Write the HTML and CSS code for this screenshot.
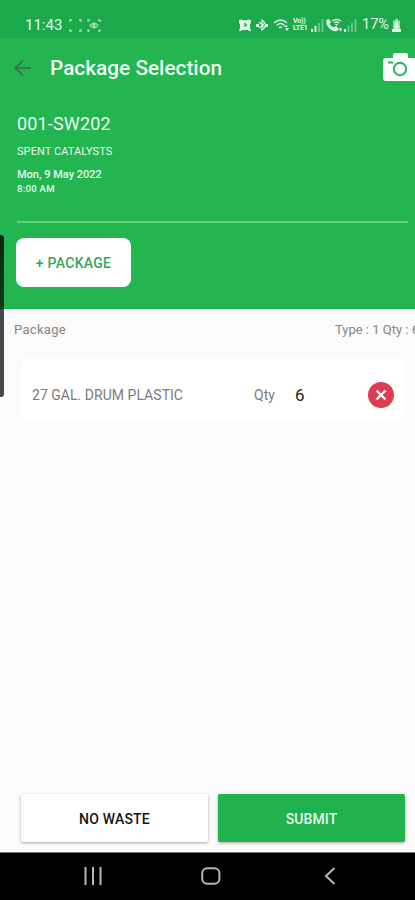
FILE: index.html
```html
<!DOCTYPE html>
<html lang="en">
<head>
<meta charset="utf-8">
<title>Package Selection</title>
<link rel="stylesheet" href="styles.css">
</head>
<body>
<div class="phone">
  <div class="status">
    <span class="clock">11:43</span>
    <svg class="frame" width="13" height="13" viewBox="0 0 13 13"><path d="M1 3V1h2M10 1h2v2M12 10v2h-2M3 12H1v-2"/></svg>
    <svg class="scan" width="14" height="13" viewBox="0 0 14 13"><path d="M1 3V1h2M11 1h2v2M13 10v2h-2M3 12H1v-2M3 6.500C5 3.500 9 3.500 11 6.500C9 9.500 5 9.500 3 6.500Z"/><circle cx="7" cy="6.500" r="1"/></svg>
    <div class="indicators">
      <svg width="12" height="13" viewBox="0 0 12 13"><path class="fill" d="M0 1l3-.5 1 .8h4l1-.8 3 .5v3l-1 1v4l1 3h-2l-1-1H3l-1 1H0l1-3V5L0 4z"/><path class="cut" d="M6 3.500V7l2-1.500"/></svg>
      <svg class="bt" width="12" height="14" viewBox="0 0 12 14"><path d="M3 4l6 5-3 3V2l3 3-6 5"/><path class="fill" d="M0 6h3v3H0zM9 6h3v3H9z"/></svg>
      <svg class="wifi" width="17" height="14" viewBox="0 0 17 14"><path d="M1 5q6.500-6 13 0M3.500 7.500q4-4 8 0M6 10q1.500-2 3 0"/><path class="fill" d="M11 9l2-2 2 2zM12 10h4l-2 3z"/></svg>
      <span class="volte">Vo))<br>LTE1</span>
      <svg class="sig1" width="13" height="13" viewBox="0 0 13 13"><path class="fill" d="M0 10h2v3H0zM3.500 7h2v6h-2z"/><path class="dim" d="M7 4h2v9H7zM10.500 0h2v13h-2z"/></svg>
      <svg class="call" width="17" height="14" viewBox="0 0 17 14"><path class="fill" d="M0 2l3-1 2 3-1.500 2Q5 9 8 9.500L10 8l3 3-2 2Q6 14 2 9 0 6 0 2z"/><path d="M6 3q4.500-3 9 0M8 5q2.500-2 5 0"/><path class="fill" d="M9 6h3l-1.500 2zM13.500 10h2v3h-2z"/></svg>
      <svg class="sig2" width="13" height="13" viewBox="0 0 13 13"><path class="fill" d="M0 10h2v3H0z"/><path class="dim" d="M3.500 7h2v6h-2zM7 4h2v9H7zM10.500 0h2v13h-2z"/></svg>
      <span class="pct">17%</span>
      <svg class="battery" width="9" height="13" viewBox="0 0 9 13"><path class="pale" d="M3 0h3v1.500h2V11H1V1.500h2z"/><path class="fill" d="M3 3h3v4h2l-3.500 3L1 7h2zM0 10h9v3H0z"/></svg>
    </div>
  </div>
  <header>
    <div class="bar">
      <svg class="back" width="18" height="18" viewBox="0 0 18 18"><path d="M17 9H2M9 1.500L1.500 9 9 16.500"/></svg>
      <h1>Package Selection</h1>
      <svg class="camera" width="32" height="29" viewBox="0 0 32 29"><path class="fill" d="M10 5V2q0-2 2-2h11q2 0 2 2v3h7v23H3q-3 0-3-3V8q0-3 3-3z"/><circle cx="17" cy="16" r="6.200"/><path d="M5 9.500h5"/></svg>
    </div>
    <div class="code">001-SW202</div>
    <div class="waste">SPENT CATALYSTS</div>
    <div class="date">Mon, 9 May 2022</div>
    <div class="time">8:00 AM</div>
    <div class="rule"></div>
    <button class="add"><span>+ PACKAGE</span></button>
  </header>
  <main>
    <div class="summary"><span class="label">Package</span><span class="totals">Type : 1 Qty : 6</span></div>
    <div class="item">
      <span class="name">27 GAL. DRUM PLASTIC</span>
      <span class="qty">Qty</span>
      <span class="num">6</span>
      <svg class="remove" width="26" height="26" viewBox="0 0 26 26"><circle cx="13" cy="13" r="13"/><path d="M8.500 8.500l9 9M17.500 8.500l-9 9"/></svg>
    </div>
  </main>
  <div class="actions">
    <button class="none">NO WASTE</button>
    <button class="submit">SUBMIT</button>
  </div>
  <nav>
    <svg width="18" height="18" viewBox="0 0 18 18"><path d="M1.500 0v18M9 0v18M16.500 0v18"/></svg>
    <svg width="20" height="18" viewBox="0 0 20 18"><rect x="1.200" y="1.200" width="17.200" height="15.600" rx="5"/></svg>
    <svg width="12" height="18" viewBox="0 0 12 18"><path d="M10.500 1L2 9l8.500 8"/></svg>
  </nav>
  <div class="edge"></div>
</div>
</body>
</html>
```
FILE: styles.css
```css
* { box-sizing: border-box; }
body { margin: 0; font-family: Roboto, sans-serif; }
button { border: 0; padding: 0; font-family: inherit; }
svg { display: block; flex: none; fill: none; }
.phone { position: relative; width: 415px; height: 900px; display: flex; flex-direction: column; overflow: hidden; background: #fbfbfb; }
.status { height: 38px; flex: none; background: #1ba94c; display: flex; align-items: center; padding: 12px 14px 0 25px; color: #e4f8e9; }
.status svg { stroke: #d3f2dc; stroke-width: 1.3; }
.status .fill { fill: #e4f8e9; stroke: none; }
.status .dim { fill: #66c585; stroke: none; }
.status .pale { fill: #9bdab0; stroke: none; }
.status .cut { stroke: #1ba94c; }
.clock { font-size: 15px; width: 38px; line-height: 16px; white-space: nowrap; }
.status .frame { margin-left: 6px; stroke: #a8dfba; }
.status .scan { margin-left: 5px; stroke: #a8dfba; }
.indicators { margin-left: auto; display: flex; align-items: center; }
.bt { margin-left: 5px; }
.wifi { margin-left: 5px; }
.volte { display: block; width: 16px; margin-left: 3px; font-size: 7px; line-height: 7px; font-weight: 700; letter-spacing: -.2px; white-space: nowrap; }
.sig1 { margin-left: 2px; }
.call { margin-left: 2px; }
.sig2 { margin-left: 1px; }
.pct { width: 28px; margin-left: 5px; font-size: 14.500px; line-height: 16px; white-space: nowrap; }
.battery { margin-left: 2px; }
header { height: 271px; flex: none; background: #22b550; color: #e9faed; border-bottom: 1px solid #12aa43; display: flex; flex-direction: column; }
.bar { height: 60px; display: flex; align-items: center; padding-left: 14px; padding-bottom: 1px; flex: none; }
.back { stroke: #43704f; stroke-width: 2; }
h1 { margin: 1px 0 0 18px; font-size: 20.800px; line-height: 24px; font-weight: 500; color: #f0fcf3; white-space: nowrap; }
.camera { margin-left: auto; stroke: #22b550; stroke-width: 2; }
.camera .fill { fill: #fff; stroke: none; }
.code { margin: 15px 0 0 17px; font-size: 18px; line-height: 22px; letter-spacing: .15px; }
.waste { margin: 10px 0 0 17px; font-size: 11px; line-height: 13px; letter-spacing: .08px; }
.date { margin: 10px 0 0 17px; font-size: 11px; line-height: 14px; font-weight: 500; }
.time { margin: 1px 0 0 17px; font-size: 9.500px; line-height: 12px; font-weight: 500; letter-spacing: .3px; }
.rule { height: 2px; margin: 26px 7px 0 17px; background: #65cd80; }
.add { width: 115px; height: 49px; margin: 15px 0 0 16px; border-radius: 8px; background: #fff; color: #2fa855; font-size: 14px; font-weight: 500; letter-spacing: .3px; }
main { flex: 1; }
.summary { display: flex; height: 49px; padding: 12px 0 0 14px; font-size: 13px; line-height: 17px; color: #858585; white-space: nowrap; overflow: hidden; }
.label { width: 321px; flex: none; letter-spacing: .3px; }
.totals { flex: none; }
.item { height: 62px; margin: 0 11px 0 21px; padding: 11px 0 0 11px; background: #fff; border-radius: 5px; display: flex; align-items: center; color: #7c7c7c; }
.name { width: 222px; font-size: 14px; white-space: nowrap; letter-spacing: .03px; }
.qty { width: 41px; font-size: 14px; }
.num { width: 73px; font-size: 17px; color: #252525; }
.remove circle { fill: #dc3d51; }
.remove path { stroke: #fff; stroke-width: 2.4; }
.actions { display: flex; gap: 10px; height: 58px; padding: 0 10px 0 21px; flex: none; }
.actions button { height: 48px; padding-top: 1px; border-radius: 2px; font-size: 14px; font-weight: 500; box-shadow: 0 1px 3px rgba(0,0,0,.35); }
.none { width: 187px; background: #fff; color: #151515; letter-spacing: .2px; }
.submit { width: 187px; background: #20b24c; color: #e5fbea; letter-spacing: .1px; }
nav { height: 48px; flex: none; background: #000; border-top: 1px solid #777; display: flex; align-items: center; padding: 0 0 2px 84px; }
nav svg { stroke: #b5b5b5; stroke-width: 2; }
nav svg + svg { margin-left: 99px; }
nav svg + svg + svg { margin-left: 103px; }
.edge { position: absolute; left: -4px; top: 235px; width: 7.500px; height: 162px; border-radius: 3px; background: linear-gradient(#0a2513 0, #103b20 74px, #4a4848 75px, #4a4848 100%); }
```
